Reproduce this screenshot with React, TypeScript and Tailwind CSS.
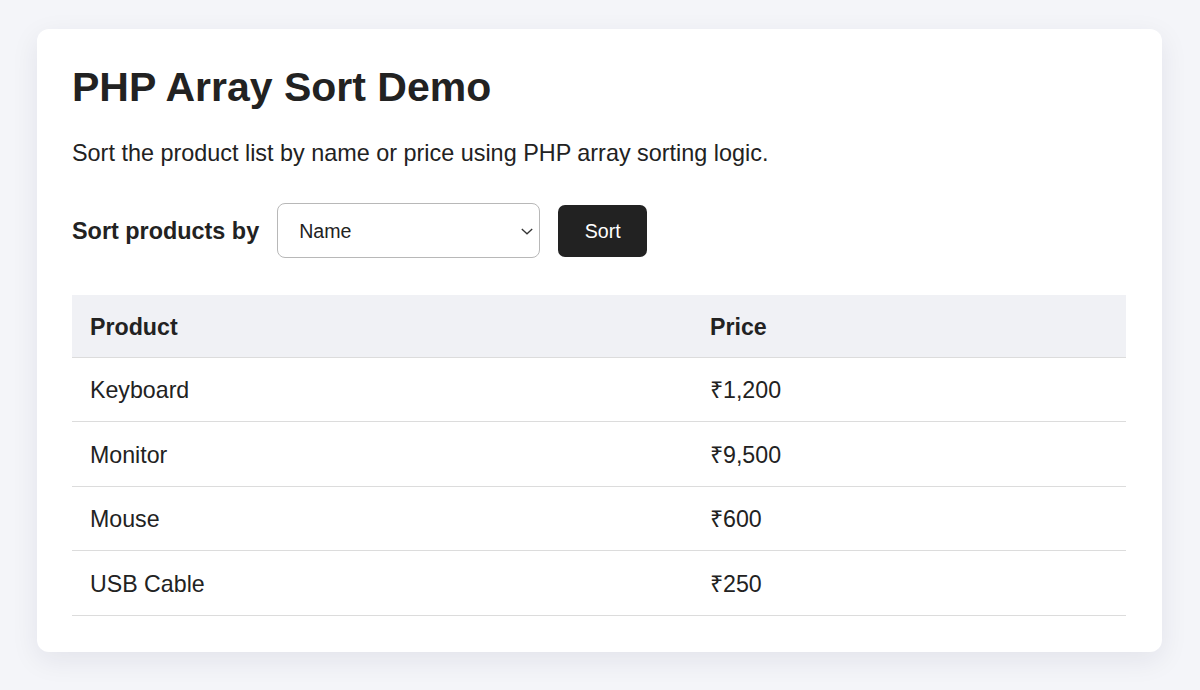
import React from "react";

const rows = [
  { name: "Keyboard", price: "₹1,200" },
  { name: "Monitor", price: "₹9,500" },
  { name: "Mouse", price: "₹600" },
  { name: "USB Cable", price: "₹250" },
];

export default function App() {
  return (
    <div
      className="min-h-screen bg-[#f4f5f9] pt-[29px] pl-[37px] pr-[38px] pb-[39px] text-[#222222]"
      style={{ fontFamily: '"Liberation Sans", Arial, sans-serif' }}
    >
      <div className="bg-white rounded-[12px] shadow-[0_8px_28px_rgba(20,30,60,0.08)] pt-[34px] pl-[35px] pr-[36px] pb-[36px]">
        <h1 className="text-[41px] leading-[48px] font-bold">PHP Array Sort Demo</h1>
        <p className="mt-[28px] text-[23.4px] leading-[28px]">
          Sort the product list by name or price using PHP array sorting logic.
        </p>
        <div className="mt-[36px] flex items-center">
          <span className="text-[23.4px] leading-[28px] font-bold">Sort products by</span>
          <div className="ml-[18px] relative w-[263px] h-[55px] border border-[#b8b8b8] rounded-[8px] flex items-center pl-[21px]">
            <span className="text-[19.6px] leading-[24px]">Name</span>
            <svg
              className="absolute right-[6px] top-[24px]"
              width="12"
              height="7"
              viewBox="0 0 12 7"
              fill="none"
              stroke="#333"
              strokeWidth="1.3"
            >
              <path d="M0.8 1 L6 5.8 L11.2 1" />
            </svg>
          </div>
          <button className="ml-[18px] w-[89px] h-[52px] rounded-[7px] bg-[#222222] text-white text-[19.6px] leading-[24px]">
            Sort
          </button>
        </div>
        <table className="mt-[37px] w-full border-collapse text-[23.2px]">
          <thead>
            <tr className="bg-[#f0f1f5] border-b border-[#dcdcdc]">
              <th className="h-[62px] w-[620px] text-left font-bold pl-[18px] pt-[3px]">Product</th>
              <th className="h-[62px] text-left font-bold pl-[18px] pt-[3px]">Price</th>
            </tr>
          </thead>
          <tbody>
            {rows.map((r) => (
              <tr key={r.name} className="border-b border-[#dcdcdc]">
                <td className="h-[64.5px] pl-[18px] pt-[3px]">{r.name}</td>
                <td className="h-[64.5px] pl-[18px] pt-[3px]">{r.price}</td>
              </tr>
            ))}
          </tbody>
        </table>
      </div>
    </div>
  );
}
